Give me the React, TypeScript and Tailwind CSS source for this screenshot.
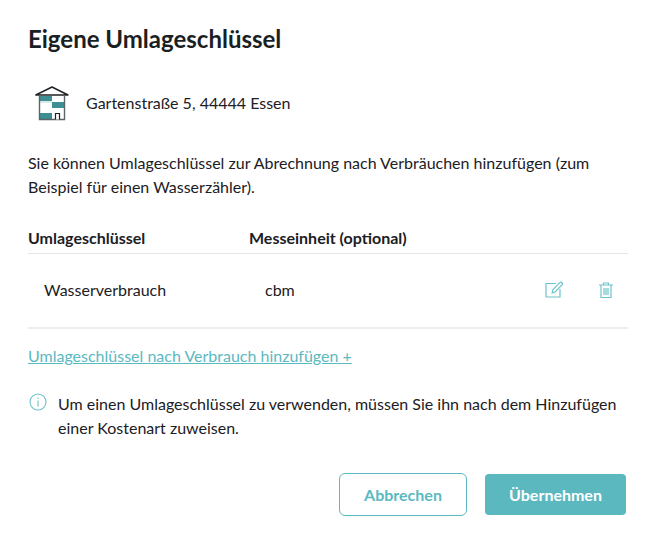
export default function App() {
  return (
    <div className="w-[655px] h-[547px] bg-white font-['Lato',sans-serif] text-[#1c2024] pl-[28px] pr-[27px] overflow-hidden">
      <h1 className="text-[24px] leading-[30px] font-bold pt-[24px] h-[54px] box-content text-[#1a1f24]">Eigene Umlageschlüssel</h1>
      <div className="flex items-center mt-[5px] h-[40px]">
        <svg width="34" height="36" viewBox="0 0 34 36" className="ml-[7px]">
          <rect x="5" y="11" width="24" height="7" fill="#fff" />
          <rect x="5" y="11" width="12" height="5" fill="#3d8f94" />
          <rect x="17" y="17" width="12" height="6" fill="#3d8f94" />
          <rect x="5" y="28" width="12" height="6" fill="#3d8f94" />
          <rect x="5" y="16.5" width="12" height="1" fill="#b8d6d8" />
          <path d="M.8 10 L17 2 L33 10 Z" fill="none" stroke="#1d2226" strokeWidth="1.4" strokeLinejoin="round" />
          <path d="M4.5 10 V34.5 H29.5 V10" fill="none" stroke="#5b6468" strokeWidth="1.4" />
          <path d="M20.5 34.5 V28.5 H24.5 V34.5" fill="#fff" stroke="#1d2226" strokeWidth="1.2" />
        </svg>
        <span className="ml-[17px] text-[16px]">Gartenstraße 5, 44444 Essen</span>
      </div>
      <p className="text-[16px] leading-[24px] mt-[28px]">
        Sie können Umlageschlüssel zur Abrechnung nach Verbräuchen hinzufügen (zum<br />Beispiel für einen Wasserzähler).
      </p>
      <div className="flex items-center h-[29px] pb-[2px] mt-[26px] text-[16px] font-bold border-b border-[#e3e6e8]">
        <span className="w-[221px]">Umlageschlüssel</span>
        <span>Messeinheit (optional)</span>
      </div>
      <div className="flex items-center h-[75px] pb-[2px] text-[16px] border-b-2 border-[#eceeef]">
        <span className="w-[221px] pl-[16px]">Wasserverbrauch</span>
        <span className="pl-[16px]">cbm</span>
        <div className="ml-auto flex items-center gap-[35px] pr-[15px]">
          <svg width="19" height="17" viewBox="0 0 19 17" fill="none" stroke="#6cc3cb" strokeWidth="1.2">
            <path d="M11 2.5 H1 V16 H15 V8" />
            <path d="M7.2 11.8 L7.8 8.8 L14.8 1.6 Q15.8 .7 17 1.7 Q18 2.8 17 3.9 L10 11 Z" />
          </svg>
          <svg width="14" height="16" viewBox="0 0 14 16" fill="none" stroke="#6cc3cb" strokeWidth="1.2">
            <path d="M0 3 H14 M4.5 3 V1 H9.5 V3" />
            <path d="M2 3 V15.5 H12 V3" />
            <path d="M5 6 V13 M7 6 V13 M9 6 V13" />
          </svg>
        </div>
      </div>
      <a className="block mt-[16px] text-[16px] leading-[22px] text-[#5bb9c1] underline">Umlageschlüssel nach Verbrauch hinzufügen +</a>
      <div className="flex items-start mt-[25px]">
        <svg width="18" height="18" viewBox="0 0 18 18" fill="none" stroke="#6cc3cb" strokeWidth="1.1" className="mt-[1px] ml-[1px] shrink-0">
          <circle cx="9" cy="9" r="8" />
          <path d="M9 7.5 V13.5 M9 4.5 V6" />
        </svg>
        <p className="ml-[11px] text-[16px] leading-[24px]">
          Um einen Umlageschlüssel zu verwenden, müssen Sie ihn nach dem Hinzufügen<br />einer Kostenart zuweisen.
        </p>
      </div>
      <div className="flex justify-end items-center gap-[18px] mt-[33px] pr-[2px]">
        <button className="w-[128px] h-[43px] rounded-[6px] border border-[#5bb9c1] bg-white text-[#5bb9c1] font-bold text-[16px]">Abbrechen</button>
        <button className="w-[141px] h-[41px] rounded-[4px] bg-[#5bb8bf] text-white font-bold text-[16px]">Übernehmen</button>
      </div>
    </div>
  );
}
